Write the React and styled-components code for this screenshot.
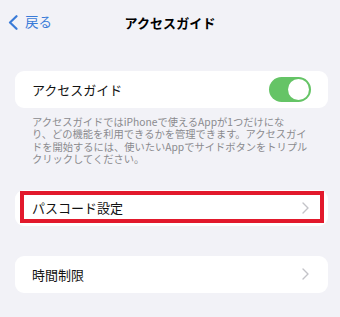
import React from "react";
import styled, { createGlobalStyle } from "styled-components";

const Global = createGlobalStyle`
  html, body { margin: 0; padding: 0; background: #f2f2f7; }
  body { font-family: "Noto Sans CJK JP", "Noto Sans", sans-serif; -webkit-font-smoothing: antialiased; }
`;

const Page = styled.div`
  width: 340px;
  height: 317px;
  background: #f2f2f7;
  overflow: hidden;
  display: flex;
  flex-direction: column;
`;

const Nav = styled.div`
  height: 44px;
  display: grid;
  grid-template-columns: 1fr auto 1fr;
  align-items: center;
`;

const Back = styled.div`
  display: flex;
  align-items: center;
  gap: 7px;
  padding-left: 8px;
  color: #3a7bd8;
  font-size: 13.5px;
  line-height: 1;
`;

const Title = styled.div`
  font-size: 13px;
  font-weight: 700;
  color: #000;
  letter-spacing: 0.1px;
`;

const Card = styled.div`
  position: relative;
  margin: ${(p) => p.$mt}px 12px 0 15px;
  background: #fff;
  border-radius: 9px;
`;

const Row = styled.div`
  height: ${(p) => p.$h}px;
  display: flex;
  align-items: center;
  justify-content: space-between;
  padding: 0 ${(p) => p.$pr}px 0 17px;
  font-size: 13px;
  color: #111;
`;

const Toggle = styled.div`
  width: 42px;
  height: 25px;
  border-radius: 13px;
  background: #65c466;
  display: flex;
  align-items: center;
  justify-content: flex-end;
  padding: 2px;
  box-sizing: border-box;
`;

const Knob = styled.div`
  width: 21px;
  height: 21px;
  border-radius: 50%;
  background: #fff;
`;

const Footer = styled.div`
  margin: 8px 0 0 32px;
  font-size: 10.25px;
  line-height: 12.4px;
  color: #8a8a8e;
`;

const Line = styled.div`
  white-space: nowrap;
`;

const Highlight = styled.div`
  position: absolute;
  left: 5px;
  right: 4px;
  top: 1px;
  bottom: 3px;
  border: 4px solid #e2192c;
  pointer-events: none;
`;

const Chevron = () => (
  <svg width="7" height="12" viewBox="0 0 7 12">
    <polyline points="1,1 6,6 1,11" fill="none" stroke="#c3c3c8" strokeWidth="1.4" strokeLinecap="round" strokeLinejoin="round" />
  </svg>
);

const BackChevron = () => (
  <svg width="10" height="15" viewBox="0 0 10 15">
    <polyline points="8.5,1.2 2,7.5 8.5,13.8" fill="none" stroke="#3a7bd8" strokeWidth="2.2" strokeLinecap="round" strokeLinejoin="round" />
  </svg>
);

export default function App() {
  return (
    <Page>
      <Global />
      <Nav>
        <Back>
          <BackChevron />
          <span>戻る</span>
        </Back>
        <Title>アクセスガイド</Title>
        <div />
      </Nav>
      <Card $mt={27}>
        <Row $h={37} $pr={17}>
          <span>アクセスガイド</span>
          <Toggle>
            <Knob />
          </Toggle>
        </Row>
      </Card>
      <Footer>
        <Line>アクセスガイドではiPhoneで使えるAppが1つだけにな</Line>
        <Line>り、どの機能を利用できるかを管理できます。アクセスガイ</Line>
        <Line>ドを開始するには、使いたいAppでサイドボタンをトリプル</Line>
        <Line>クリックしてください。</Line>
      </Footer>
      <Card $mt={24}>
        <Row $h={36} $pr={19}>
          <span>パスコード設定</span>
          <Chevron />
        </Row>
        <Highlight />
      </Card>
      <Card $mt={30}>
        <Row $h={37} $pr={19}>
          <span>時間制限</span>
          <Chevron />
        </Row>
      </Card>
    </Page>
  );
}
